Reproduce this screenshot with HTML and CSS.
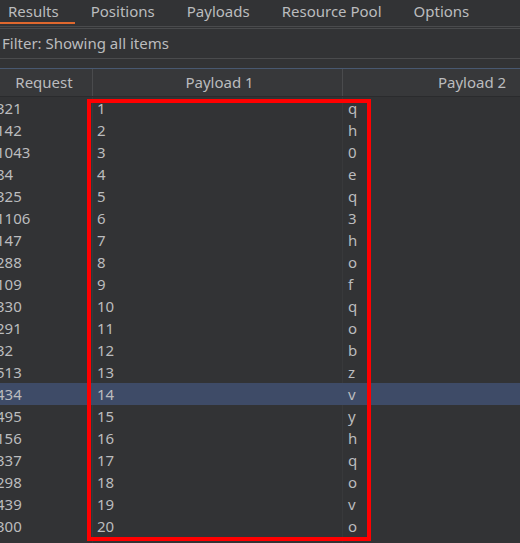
FILE: index.html
```html
<!DOCTYPE html>
<html>
<head>
<meta charset="utf-8">
<link rel="stylesheet" href="styles.css">
</head>
<body>
<div class="tabs">
  <div class="tab active">Results</div>
  <div class="tab">Positions</div>
  <div class="tab">Payloads</div>
  <div class="tab">Resource Pool</div>
  <div class="tab">Options</div>
</div>
<div class="filter">Filter: Showing all items</div>
<div class="table">
  <div class="row head">
    <div class="cell c1">Request</div>
    <div class="cell c2">Payload 1</div>
    <div class="cell c3">Payload 2</div>
  </div>
  <div class="row"><div class="cell c1">321</div><div class="cell c2">1</div><div class="cell c3">q</div></div>
  <div class="row"><div class="cell c1">142</div><div class="cell c2">2</div><div class="cell c3">h</div></div>
  <div class="row"><div class="cell c1">1043</div><div class="cell c2">3</div><div class="cell c3">0</div></div>
  <div class="row"><div class="cell c1">84</div><div class="cell c2">4</div><div class="cell c3">e</div></div>
  <div class="row"><div class="cell c1">325</div><div class="cell c2">5</div><div class="cell c3">q</div></div>
  <div class="row"><div class="cell c1">1106</div><div class="cell c2">6</div><div class="cell c3">3</div></div>
  <div class="row"><div class="cell c1">147</div><div class="cell c2">7</div><div class="cell c3">h</div></div>
  <div class="row"><div class="cell c1">288</div><div class="cell c2">8</div><div class="cell c3">o</div></div>
  <div class="row"><div class="cell c1">109</div><div class="cell c2">9</div><div class="cell c3">f</div></div>
  <div class="row"><div class="cell c1">330</div><div class="cell c2">10</div><div class="cell c3">q</div></div>
  <div class="row"><div class="cell c1">291</div><div class="cell c2">11</div><div class="cell c3">o</div></div>
  <div class="row"><div class="cell c1">32</div><div class="cell c2">12</div><div class="cell c3">b</div></div>
  <div class="row"><div class="cell c1">513</div><div class="cell c2">13</div><div class="cell c3">z</div></div>
  <div class="row sel"><div class="cell c1">434</div><div class="cell c2">14</div><div class="cell c3">v</div></div>
  <div class="row"><div class="cell c1">495</div><div class="cell c2">15</div><div class="cell c3">y</div></div>
  <div class="row"><div class="cell c1">156</div><div class="cell c2">16</div><div class="cell c3">h</div></div>
  <div class="row"><div class="cell c1">337</div><div class="cell c2">17</div><div class="cell c3">q</div></div>
  <div class="row"><div class="cell c1">298</div><div class="cell c2">18</div><div class="cell c3">o</div></div>
  <div class="row"><div class="cell c1">439</div><div class="cell c2">19</div><div class="cell c3">v</div></div>
  <div class="row"><div class="cell c1">300</div><div class="cell c2">20</div><div class="cell c3">o</div></div>
  <div class="row"><div class="cell c1">315</div><div class="cell c2">21</div><div class="cell c3">k</div></div>
</div>
<div class="redbox"></div>
</body>
</html>
```
FILE: styles.css
```css
html, body {
  margin: 0;
  padding: 0;
}
body {
  width: 520px;
  height: 543px;
  overflow: hidden;
  background: #323335;
  color: #bbbcbe;
  font-family: "Noto Sans", "DejaVu Sans", sans-serif;
  font-size: 15px;
  position: relative;
}
.tabs {
  display: flex;
  height: 26px;
  border-bottom: 1px solid #4a4b4d;
}
.tab {
  padding: 0 16px;
  height: 22px;
  line-height: 22px;
  white-space: nowrap;
  border-bottom: 2px solid transparent;
}
.tab.active {
  margin-left: -8px;
  border-bottom-color: #e0682e;
}
.filter {
  margin-top: 1px;
  height: 29px;
  line-height: 29px;
  border-top: 1px solid #4a4b4d;
  border-bottom: 1px solid #4a4b4d;
  padding-left: 2px;
}
.table {
  margin-top: 9px;
  margin-left: -5px;
  width: 602px;
}
.row {
  display: grid;
  grid-template-columns: 98px 250px 254px;
  height: 22px;
  line-height: 22px;
}
.row.head {
  height: 27px;
  line-height: 27px;
  border-top: 1px solid #485870;
  border-bottom: 1px solid #2a2b2d;
  background: #37383a;
}
.row.head .cell {
  text-align: center;
  border-right: 1px solid #4a4b4d;
}
.cell {
  white-space: nowrap;
  overflow: hidden;
  border-right: 1px solid #38393b;
}
.c1 { padding-left: 1px; }
.c2 { padding-left: 4px; }
.c3 { padding-left: 5px; }
.row.sel {
  background: #3e4b67;
}
.row.sel .cell { border-right-color: #3e4b67; }
.redbox {
  position: absolute;
  left: 87px;
  top: 99px;
  width: 276px;
  height: 434px;
  border: 4px solid #ff0000;
}
```
